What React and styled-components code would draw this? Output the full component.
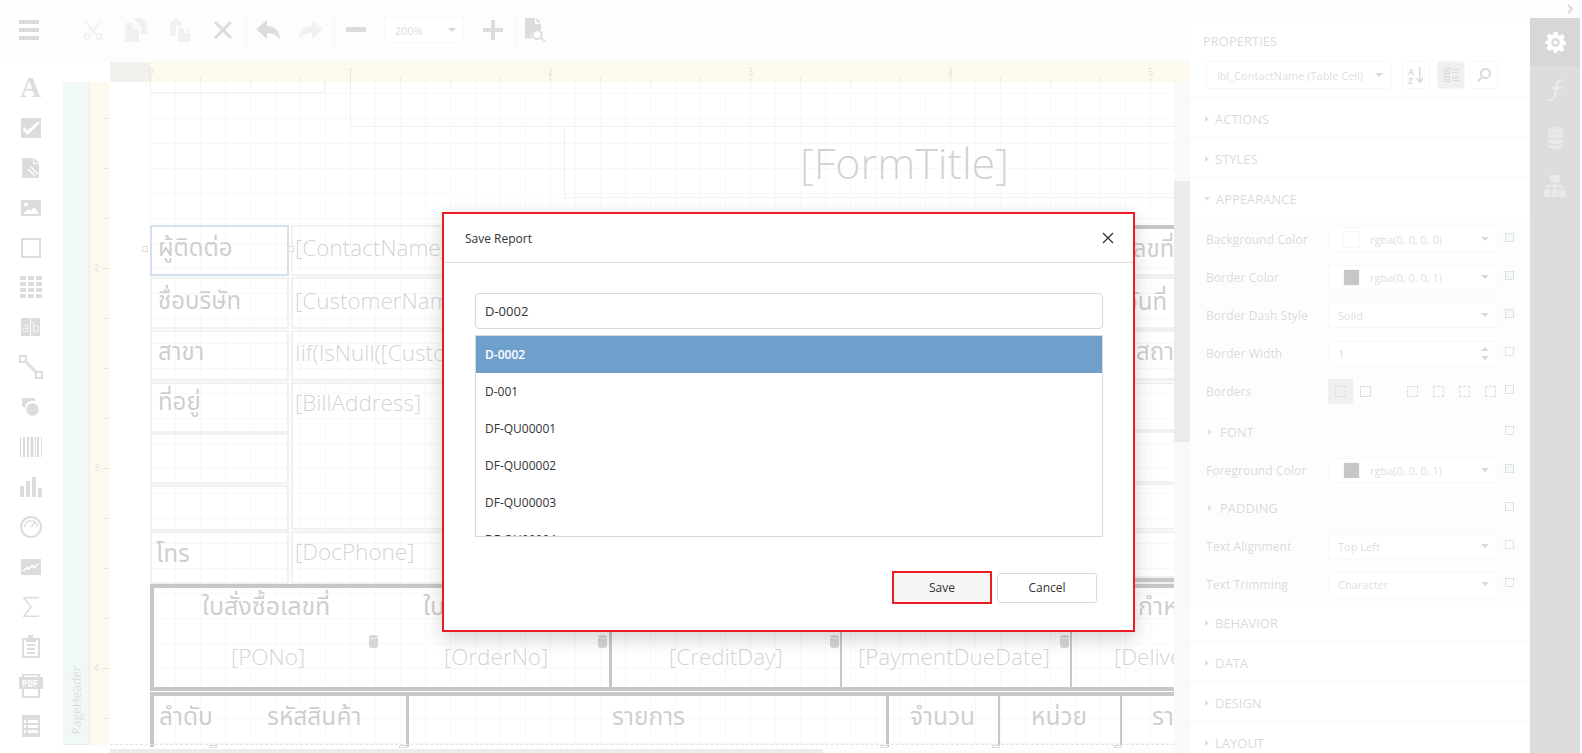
import React from "react";
import styled, { createGlobalStyle } from "styled-components";

const GlobalStyle = createGlobalStyle`
  html, body {
    margin: 0;
    padding: 0;
    overflow: hidden;
    background: #ffffff;
    font-family: "Open Sans", "Noto Sans", "Noto Sans Thai", "DejaVu Sans", sans-serif;
  }
  * { box-sizing: border-box; }
`;

/* icons */
const Svg = ({ w = 20, h = 20, vb = "0 0 20 20", children }) => (
  <svg width={w} height={h} viewBox={vb} fill="currentColor">
    {children}
  </svg>
);

const IconMenu = () => (
  <Svg h={20}><rect y="0" width="20" height="4" /><rect y="8" width="20" height="4" /><rect y="16" width="20" height="4" /></Svg>
);
const IconCut = () => (
  <Svg>
    <path d="M3 0l7 9 7-9h1.500l-7 11 2 3h-2.400L10 12l-1.100 2H6.500l2-3L1.500 0z" />
    <path fillRule="evenodd" d="M4 13a3.500 3.500 0 110 7 3.500 3.500 0 010-7zm0 1.800a1.700 1.700 0 100 3.400 1.700 1.700 0 000-3.400zM16 13a3.500 3.500 0 110 7 3.500 3.500 0 010-7zm0 1.800a1.700 1.700 0 100 3.400 1.700 1.700 0 000-3.400z" />
  </Svg>
);
const IconCopy = () => (
  <Svg w={22} h={24} vb="0 0 22 24">
    <path d="M10 0h7l5 5v11h-6V8l-6-5z" />
    <path d="M0 5h8v6h6v13H0z" />
    <path d="M10 5.500L13.500 9H10z" />
  </Svg>
);
const IconPaste = () => (
  <Svg w={22} h={24} vb="0 0 22 24">
    <path d="M2 3h4V0h4v3h4v5H8v10H2z" />
    <path d="M10 10h6v5h6v9H10z" />
    <path d="M18 10l4 4h-4z" />
  </Svg>
);
const IconClose = () => (
  <svg width="18" height="18" viewBox="0 0 18 18" fill="none" stroke="currentColor" strokeWidth="3">
    <path d="M1 1l16 16M17 1L1 17" />
  </svg>
);
const IconUndo = () => (
  <Svg w={24} h={20} vb="0 0 24 20">
    <path d="M11 0v6c8 0 13 5 13 14-3-5-7-7-13-7v6L0 9z" />
  </Svg>
);
const IconRedo = () => (
  <Svg w={24} h={20} vb="0 0 24 20">
    <path d="M13 0v6C5 6 0 11 0 20c3-5 7-7 13-7v6L24 9z" />
  </Svg>
);
const IconMinus = () => (
  <Svg h={6} vb="0 0 20 6"><rect width="20" height="5" /></Svg>
);
const IconPlus = () => (
  <Svg><path d="M8 0h4v8h8v4h-8v8H8v-8H0V8h8z" /></Svg>
);
const IconPreview = () => (
  <Svg w={22} h={24} vb="0 0 22 24">
    <path d="M0 0h10v6h6v6a7 7 0 00-9.500 8.500H0z" />
    <path d="M11.500 0L16 4.500h-4.500z" />
    <path fillRule="evenodd" d="M12 11a5.500 5.500 0 014.500 8.600l4.500 3.300-1.200 1.100-4.400-3.300A5.500 5.500 0 1112 11zm0 2a3.500 3.500 0 100 7 3.500 3.500 0 000-7z" />
  </Svg>
);
const IconCheck = () => (
  <Svg h={20}>
    <path fillRule="evenodd" d="M0 0h20v20H0zM1.500 11.500l5 5.500L18.500 5.500 17 3.500 6.500 12.500l-3-3z" />
  </Svg>
);
const IconSubreport = () => (
  <Svg w={17} h={20} vb="0 0 17 20">
    <path d="M0 0h11v6h6v14H0z" />
    <path d="M12 0l5 5h-5z" />
    <path d="M6 11l7 7M9 9l7 7" fill="none" stroke="#fcfcfc" strokeWidth="1.500" />
  </Svg>
);
const IconImage = () => (
  <Svg h={16} vb="0 0 20 16">
    <path fillRule="evenodd" d="M0 0h20v16H0zm5 2.500a2 2 0 100 4 2 2 0 000-4zM2 14l5-5 3 2 3-4 5 7z" />
  </Svg>
);
const IconRect = () => (
  <Svg><path fillRule="evenodd" d="M0 0h20v20H0zm2 2v16h16V2z" /></Svg>
);
const IconTable = () => (
  <Svg w={22} h={22} vb="0 0 22 22">
    {[0, 8, 16].map((x) => [0, 6, 12, 18].map((y) => <rect key={`${x}-${y}`} x={x} y={y} width="6" height="4" />))}
  </Svg>
);
const IconLabel = () => (
  <Svg w={19} h={18} vb="0 0 19 18">
    <rect width="9" height="18" />
    <rect x="10" width="9" height="18" />
    <text x="1.200" y="14" fontSize="12" fontWeight="300" fontFamily="Open Sans" fill="#fcfcfc">a</text>
    <text x="11" y="14" fontSize="12" fontWeight="300" fontFamily="Open Sans" fill="#fcfcfc">b</text>
  </Svg>
);
const IconLine = () => (
  <Svg w={24} h={24} vb="0 0 24 24">
    <path fillRule="evenodd" d="M0 0h8v8H0zm2 2v4h4V2zM16 16h8v8h-8zm2 2v4h4v-4z" />
    <path d="M7 5l12 12-2 2L5 7z" />
  </Svg>
);
const IconShape = () => (
  <Svg w={17} h={18} vb="0 0 17 18">
    <path d="M0 0h13v3A7.500 7.500 0 003 10.500L0 8z" />
    <circle cx="10.500" cy="11.500" r="6.200" />
  </Svg>
);
const IconBarcode = () => (
  <Svg w={22} h={20} vb="0 0 22 20">
    {[[0, 1], [3, 2], [7, 2], [10.500, 3], [15, 1], [17, 2], [21, 1]].map(([x, w]) => (
      <rect key={x} x={x} y="0" width={w} height="20" />
    ))}
  </Svg>
);
const IconChart = () => (
  <Svg w={22} h={20} vb="0 0 22 20">
    <rect y="9" width="4" height="11" /><rect x="6" y="4" width="4" height="16" />
    <rect x="12" y="0" width="4" height="20" /><rect x="18" y="11" width="4" height="9" />
  </Svg>
);
const IconGauge = () => (
  <Svg w={22} h={22} vb="0 0 22 22">
    <path fillRule="evenodd" d="M11 0a11 11 0 110 22 11 11 0 010-22zm0 2a9 9 0 100 18 9 9 0 000-18z" />
    <path d="M11 4a7 7 0 017 7h-1.500a5.500 5.500 0 00-1.600-3.900L12 11h-1.500l3.300-5A5.500 5.500 0 005.500 11H4a7 7 0 017-7z" />
  </Svg>
);
const IconSpark = () => (
  <Svg h={16} vb="0 0 20 16">
    <path fillRule="evenodd" d="M0 0h20v16H0zm2 13l4-3 2 1 3-3 2 2 5-5v-1l-5 3.500-2-2-3 3-2-1-4 3.500z" />
  </Svg>
);
const IconSigma = () => (
  <Svg w={16} h={20} vb="0 0 16 20">
    <path d="M0 0h16v1.500H2.500L9 10l-6.500 8.500H16V20H0v-1l7-9-7-9z" />
  </Svg>
);
const IconClipboard = () => (
  <Svg w={18} h={23} vb="0 0 18 23">
    <path fillRule="evenodd" d="M0 3h6V0h5v3h7v20H0zm2 2v16h14V5h-2v2H4V5z" />
    <rect x="5" y="9" width="8" height="2" /><rect x="5" y="13" width="8" height="2" /><rect x="5" y="17" width="8" height="2" />
  </Svg>
);
const IconPdf = () => (
  <Svg w={24} h={24} vb="0 0 24 24">
    <path fillRule="evenodd" d="M3 0h18v3h3v12h-3v9H3v-9H0V3h3zm2 1.500V3h14V1.500zM5 15v7h14v-7z" />
    <text x="3" y="12.500" fontSize="9" fontWeight="700" fontFamily="DejaVu Sans Mono" fill="#fcfcfc">PDF</text>
  </Svg>
);
const IconList = () => (
  <Svg w={18} h={22} vb="0 0 18 22">
    <path fillRule="evenodd" d="M0 0h18v22H0zm2 5v3h2V5zm4 0v3h10V5zM2 10v3h2v-3zm4 0v3h10v-3zM2 15v3h2v-3zm4 0v3h10v-3z" />
  </Svg>
);
const IconGear = () => (
  <Svg w={21} h={21} vb="0 0 20 20">
    <path fillRule="evenodd" d="M8 0h4l.500 2.800 1.600.700L16.500 2 19 4.700 17.300 7l.700 1.700L20 9v3l-2.300.500-.600 1.600 1.500 2.400-2.800 2.600-2.200-1.600-1.600.700L11.500 20h-3l-.500-2.800-1.600-.600L4 18 1.300 15.400l1.500-2.300-.600-1.600L0 11V8.500L2.300 8l.700-1.700L1.500 4 4 1.500l2.400 1.600L8 2.500zM10 6a4 4 0 100 8 4 4 0 000-8zm0 2a2 2 0 110 4 2 2 0 010-4z" />
  </Svg>
);
const IconFunc = () => (
  <Svg w={16} h={22} vb="0 0 16 22">
    <path d="M16 0v2c-3 0-4 .500-4.500 3L11 8h4v2h-4.300L9 18c-.600 3-2.500 4-5 4H1v-2h2.500c1.800 0 2.500-1 3-3l1.400-7H5V8h3.300L9 4.500C9.600 1.500 12 0 16 0z" />
  </Svg>
);
const IconDb = () => (
  <Svg w={15} h={22} vb="0 0 15 22">
    <ellipse cx="7.500" cy="3" rx="7.500" ry="3" />
    <path d="M0 5c1 2 14 2 15 0v4c-1 3-14 3-15 0zM0 11c1 2.500 14 2.500 15 0v4c-1 3-14 3-15 0zM0 17c1 2.500 14 2.500 15 0v2c-1 4-14 4-15 0z" />
  </Svg>
);
const IconTree = () => (
  <Svg w={22} h={22} vb="0 0 22 22">
    <rect x="6" y="0" width="10" height="7" />
    <path d="M10 7h2v3h7v5h-2v-3h-5v3h-2v-3H5v3H3v-5h7z" />
    <rect x="0" y="15" width="7" height="7" /><rect x="8" y="15" width="6" height="7" /><rect x="15" y="15" width="7" height="7" />
  </Svg>
);
const IconSort = () => (
  <Svg w={16} h={17} vb="0 0 16 17">
    <text x="0" y="7.500" fontSize="8.500" fontWeight="700" fontFamily="Open Sans">A</text>
    <text x="0" y="16.500" fontSize="8.500" fontWeight="700" fontFamily="Open Sans">Z</text>
    <path d="M11 0h1.500v13l2.500-3v2l-3.200 4.500L8.500 12v-2l2.500 3z" />
  </Svg>
);
const IconCategory = () => (
  <Svg w={15} h={15} vb="0 0 15 15">
    <path fillRule="evenodd" d="M0 0h6v6H0zm1 1v4h4V1zM0 8h6v6H0zm1 1v4h4V9z" />
    <rect x="2.500" y="2" width="1" height="2" /><rect x="2" y="2.500" width="2" height="1" />
    <rect x="2.500" y="10" width="1" height="2" /><rect x="2" y="10.500" width="2" height="1" />
    <rect x="8" y="1" width="7" height="1" /><rect x="8" y="4" width="7" height="1" />
    <rect x="8" y="9" width="7" height="1" /><rect x="8" y="12" width="7" height="1" />
  </Svg>
);
const IconSearch = () => (
  <Svg w={14} h={14} vb="0 0 14 14">
    <path fillRule="evenodd" d="M8.500 0a5.500 5.500 0 11-3.200 10L1.500 14 0 12.500 4 8.700A5.500 5.500 0 018.500 0zm0 2a3.500 3.500 0 100 7 3.500 3.500 0 000-7z" />
  </Svg>
);
const IconDbSmall = () => (
  <Svg w={9} h={13} vb="0 0 9 13">
    <ellipse cx="4.500" cy="1.500" rx="4.500" ry="1.500" />
    <path d="M0 3c1 1 8 1 9 0v8.500c-1 2-8 2-9 0z" />
  </Svg>
);

/* shell */
const Page = styled.div`
  position: relative;
  display: flex;
  width: 1582px;
  height: 753px;
  overflow: hidden;
  background: #ffffff;
`;

const LeftBar = styled.div`
  width: 61px;
  flex: none;
  display: flex;
  flex-direction: column;
  color: #626262;
`;

const MenuCell = styled.div`
  height: 62px;
  padding-top: 20px;
  padding-left: 19px;
  background: #f8f8f8;
  border-bottom: 1px solid #f0f0f0;
`;

const ToolList = styled.div`
  display: flex;
  flex-direction: column;
  background: #fcfcfc;
  flex: 1;
  padding-top: 6px;
`;

const ToolIcon = styled.div`
  height: 39.900px;
  flex: none;
  display: flex;
  justify-content: center;
  align-items: center;
  line-height: 0;
`;

const ToolA = styled.span`
  font-family: "Liberation Serif", serif;
  font-weight: 700;
  font-size: 29px;
  line-height: 1;
`;

const Main = styled.div`
  width: 1129px;
  flex: none;
  display: flex;
  flex-direction: column;
`;

const Toolbar = styled.div`
  height: 62px;
  flex: none;
  display: flex;
  align-items: center;
  background: #f6f6f6;
  color: #626262;
  padding: 0 0 2px 22px;
`;

const ToolBtn = styled.div`
  display: flex;
  align-items: center;
  line-height: 0;
  margin-right: ${(p) => p.$mr || 0}px;
  opacity: ${(p) => (p.$faded ? 0.35 : 1)};
`;

const ToolSep = styled.div`
  width: 1px;
  height: 34px;
  background: #d5d5d5;
  margin-right: ${(p) => p.$mr}px;
`;

const ZoomCombo = styled.div`
  width: 80px;
  height: 26px;
  margin-right: 19px;
  display: flex;
  align-items: center;
  justify-content: space-between;
  padding: 0 7px 0 10px;
  background: #ffffff;
  border: 1px solid #dddddd;
  border-radius: 3px;
  font-size: 11px;
  color: #555555;
`;

const Caret = styled.i`
  width: 0;
  height: 0;
  display: block;
  border-left: 4px solid transparent;
  border-right: 4px solid transparent;
  border-top: 4px solid #555555;
`;

const RulerRow = styled.div`
  height: 20px;
  flex: none;
  display: flex;
  padding-left: 49px;
`;

const RulerCorner = styled.div`
  width: 40px;
  flex: none;
  background: #bdbdb0;
`;

const Ruler = styled.div`
  position: relative;
  flex: 1;
  background: #fae4ad;
`;

const RulerTick = styled.i`
  position: absolute;
  left: ${(p) => p.$x}px;
  bottom: 0;
  width: 1px;
  height: ${(p) => (p.$major ? 8 : 4)}px;
  background: #8a8a80;
`;

const RulerNum = styled.span`
  position: absolute;
  left: ${(p) => p.$x - 2}px;
  top: 3px;
  font-size: 9px;
  color: #666666;
`;

const Work = styled.div`
  flex: 1;
  display: flex;
  min-height: 0;
`;

const BandStrip = styled.div`
  width: 46px;
  margin-left: 2px;
  margin-bottom: 8px;
  flex: none;
  display: flex;
  margin-right: 1px;
`;

const BandName = styled.div`
  width: 27px;
  flex: none;
  background: #bfe2df;
  border-right: 1px solid #aaaaaa;
  border-bottom: 1px solid #aaaaaa;
  display: flex;
  align-items: flex-end;
  justify-content: center;
  padding-bottom: 10px;
`;

const BandText = styled.span`
  writing-mode: vertical-rl;
  transform: rotate(180deg);
  font-size: 12px;
  color: #666666;
`;

const SideRuler = styled.div`
  position: relative;
  flex: 1;
  background: #fae4ad;
`;

const SideTick = styled.i`
  position: absolute;
  right: 0;
  top: ${(p) => p.$y}px;
  width: 6px;
  height: 1px;
  background: #8a8a80;
`;

const SideNum = styled.span`
  position: absolute;
  left: 4px;
  top: ${(p) => p.$y - 7}px;
  font-size: 9px;
  color: #666666;
`;

const Canvas = styled.div`
  position: relative;
  flex: 1;
  overflow: hidden;
  background: #ffffff;
`;

const GridLayer = styled.div`
  position: absolute;
  left: 40px;
  top: 0;
  bottom: 9px;
  right: 0;
  background-image:
    linear-gradient(to right, #dedede 1px, transparent 1px),
    linear-gradient(to bottom, #dedede 1px, transparent 1px);
  background-size: 25px 25px, 25px 25px;
  background-position: 0 0, 0 11px;
`;

const Frame = styled.div`
  position: absolute;
  left: ${(p) => p.$x}px;
  top: ${(p) => p.$y}px;
  width: ${(p) => p.$w}px;
  height: ${(p) => p.$h}px;
  border: ${(p) => p.$line || "2px solid #bdbdbd"};
  ${(p) => p.$noTop && "border-top: none;"}
  ${(p) => p.$noBottom && "border-bottom: none;"}
  display: flex;
  align-items: ${(p) => p.$valign || "center"};
  white-space: nowrap;
  overflow: hidden;
`;

const CellText = styled.span`
  font-size: ${(p) => p.$size || 24}px;
  font-weight: 400;
  color: #222222;
  padding-left: ${(p) => p.$pad || 0}px;
  padding-bottom: ${(p) => p.$pb || 0}px;
  font-family: "Noto Sans Thai", "Open Sans", "Noto Sans", sans-serif;
  line-height: 1;
`;

const FieldText = styled.span`
  font-size: ${(p) => p.$size || 22.500}px;
  font-weight: 300;
  color: #333333;
  padding-left: ${(p) => p.$pad || 0}px;
  padding-bottom: ${(p) => p.$pb || 0}px;
  padding-top: ${(p) => p.$pt || 0}px;
  font-family: "Open Sans", sans-serif;
  line-height: 1;
`;

const Bar = styled.div`
  position: absolute;
  left: ${(p) => p.$x}px;
  top: ${(p) => p.$y}px;
  width: ${(p) => p.$w}px;
  height: ${(p) => p.$h}px;
  background: #000000;
`;

const Marker = styled.div`
  position: absolute;
  left: ${(p) => p.$x}px;
  top: ${(p) => p.$y}px;
  color: #444444;
  line-height: 0;
  white-space: nowrap;
`;

const Handle = styled.i`
  position: absolute;
  left: ${(p) => p.$x}px;
  top: ${(p) => p.$y}px;
  width: 6px;
  height: 6px;
  background: #ffffff;
  border: 1px solid #666666;
`;

const BottomHandle = styled.i`
  position: absolute;
  left: ${(p) => p.$x}px;
  top: 663px;
  width: 8px;
  height: 3px;
  border: 1px solid #666666;
  background: #ffffff;
`;

const BandEdge = styled.div`
  position: absolute;
  left: 0;
  right: 0;
  top: 662px;
  border-top: 1px dashed #888888;
`;

const VScroll = styled.div`
  width: 16px;
  flex: none;
  background: #e2e2e2;
  display: flex;
  flex-direction: column;
`;

const VTrack = styled.div`
  height: 99px;
  flex: none;
  background: #e2e2e2;
`;

const VThumb = styled.div`
  height: 261px;
  flex: none;
  background: #a4a4a4;
`;

const HScroll = styled.div`
  position: absolute;
  left: 0;
  right: 0;
  bottom: 0;
  height: 4px;
  background: #f2f2f2;
`;

const HThumb = styled.div`
  width: 713px;
  height: 100%;
  background: #aaaaaa;
`;

/* right panel */
const Panel = styled.div`
  width: 340px;
  flex: none;
  display: flex;
  flex-direction: column;
  margin-top: 18px;
  background: #ffffff;
`;

const RightWrap = styled.div`
  position: relative;
  width: 392px;
  flex: none;
  display: flex;
`;

const TopStrip = styled.div`
  position: absolute;
  left: 0;
  top: 0;
  right: 0;
  height: 18px;
  background: #f6f6f6;
  color: #555555;
  display: flex;
  align-items: center;
  justify-content: flex-end;
  padding-right: 8px;
`;

const TabBar = styled.div`
  width: 50px;
  flex: none;
  margin-top: 18px;
  background: #646464;
  display: flex;
  flex-direction: column;
  color: #999999;
`;

const Tab = styled.div`
  height: 48px;
  display: flex;
  align-items: center;
  justify-content: center;
  line-height: 0;
  background: ${(p) => (p.$active ? "#4a4a4a" : "transparent")};
  color: ${(p) => (p.$active ? "#ffffff" : "#999999")};
`;

const PanelHead = styled.div`
  height: 80px;
  padding: 14px 0 0 13px;
  flex: none;
  border-bottom: 1px solid #dddddd;
`;

const PanelTitle = styled.div`
  font-size: 13px;
  line-height: 18px;
  color: #555555;
`;

const HeadRow = styled.div`
  display: flex;
  margin: 11px 0 0 3px;
`;

const SelectBox = styled.div`
  display: flex;
  align-items: center;
  justify-content: space-between;
  width: ${(p) => p.$w}px;
  height: ${(p) => p.$h}px;
  flex: none;
  background: #ffffff;
  border: 1px solid #dddddd;
  border-radius: 3px;
  padding: 0 8px 0 ${(p) => p.$pl}px;
  font-size: 11px;
  color: #666666;
`;

const SquareBtn = styled.div`
  width: 28px;
  height: 28px;
  flex: none;
  margin-left: ${(p) => p.$ml}px;
  display: flex;
  align-items: center;
  justify-content: center;
  line-height: 0;
  color: #555555;
  border: 1px solid #dddddd;
  border-radius: 3px;
  background: ${(p) => (p.$active ? "#b9b9b9" : "#ffffff")};
`;

const Section = styled.div`
  height: 40px;
  flex: none;
  display: flex;
  align-items: center;
  padding: 2px 0 0 15px;
  gap: 6px;
  font-size: 13px;
  color: #555555;
  border-bottom: ${(p) => (p.$flat ? "none" : "1px solid #e4e4e4")};
`;

const Tri = styled.i`
  width: 0;
  height: 0;
  display: block;
  flex: none;
  border-top: 3px solid transparent;
  border-bottom: 3px solid transparent;
  border-left: 4px solid #777777;
`;

const TriDown = styled.i`
  width: 0;
  height: 0;
  display: block;
  flex: none;
  margin-left: -1px;
  border-left: 3px solid transparent;
  border-right: 3px solid transparent;
  border-top: 4px solid #777777;
`;

const Group = styled.div`
  flex: none;
  height: 384px;
  padding-top: 2px;
  background: #f7f7f7;
`;

const PropRow = styled.div`
  height: 38px;
  display: flex;
  align-items: center;
  padding-left: 16px;
  margin-top: ${(p) => p.$mt || 0}px;
  position: relative;
`;

const PropLabel = styled.div`
  width: 122px;
  flex: none;
  font-size: 12px;
  color: #555555;
  letter-spacing: 0.1px;
`;

const Swatch = styled.i`
  width: 17px;
  height: 17px;
  flex: none;
  display: block;
  margin-right: 10px;
  background: ${(p) => p.$c};
  border: 1px solid #dddddd;
`;

const ValueWrap = styled.div`
  display: flex;
  align-items: center;
`;

const Spin = styled.div`
  display: flex;
  flex-direction: column;
  gap: 5px;
`;

const CaretUp = styled.i`
  width: 0;
  height: 0;
  display: block;
  border-left: 4px solid transparent;
  border-right: 4px solid transparent;
  border-bottom: 4px solid #555555;
`;

const Check = styled.i`
  position: absolute;
  left: 315px;
  top: 13px;
  width: 9px;
  height: 9px;
  display: block;
  border: 1px solid #777777;
  background: ${(p) => (p.$tint ? "#c8e6f2" : "transparent")};
`;

const SubHead = styled.div`
  height: 100%;
  display: flex;
  align-items: center;
  gap: 8px;
  font-size: 13px;
  color: #555555;
  padding-left: 2px;
`;

const BorderTools = styled.div`
  display: flex;
  align-items: center;
`;

const BorderCell = styled.div`
  width: 25px;
  height: 25px;
  display: flex;
  align-items: center;
  justify-content: center;
  margin-right: ${(p) => p.$mr || 0}px;
  background: ${(p) => (p.$active ? "#b9b9b9" : "transparent")};
`;

const BorderBox = styled.i`
  width: 11px;
  height: 11px;
  display: block;
  border: 1px ${(p) => (p.$solid ? "solid #666666" : "dashed #666666")};
`;

/* dialog */
const Overlay = styled.div`
  position: absolute;
  inset: 0;
  background: rgba(255, 255, 255, 0.78);
`;

const Dialog = styled.div`
  position: absolute;
  left: 442px;
  top: 212px;
  width: 693px;
  height: 420px;
  display: flex;
  flex-direction: column;
  background: #ffffff;
  border: 2px solid #ed1c24;
  box-shadow: 0 6px 18px rgba(0, 0, 0, 0.18);
  color: #333333;
`;

const DialogHead = styled.div`
  height: 49px;
  flex: none;
  display: flex;
  align-items: center;
  justify-content: space-between;
  padding: 0 19px 0 21px;
  border-bottom: 1px solid #dddddd;
  font-size: 12px;
`;

const CloseBtn = styled.div`
  color: #333333;
  line-height: 0;
`;

const DialogBody = styled.div`
  flex: 1;
  padding: 30px 30px 0 31px;
`;

const NameInput = styled.div`
  height: 36px;
  display: flex;
  align-items: center;
  padding-left: 9px;
  border: 1px solid #d9d9d9;
  border-radius: 4px;
  font-size: 13px;
`;

const FileList = styled.div`
  height: 202px;
  margin-top: 6px;
  border: 1px solid #d9d9d9;
  overflow: hidden;
`;

const FileRow = styled.div`
  height: 37px;
  display: flex;
  align-items: center;
  padding-left: 9px;
  font-size: 12px;
  background: ${(p) => (p.$selected ? "#6fa0cc" : "#ffffff")};
  color: ${(p) => (p.$selected ? "#ffffff" : "#333333")};
  font-weight: ${(p) => (p.$selected ? 600 : 400)};
`;

const DialogFoot = styled.div`
  display: flex;
  justify-content: flex-end;
  align-items: center;
  gap: 5px;
  margin-top: 34px;
  padding-right: 6px;
`;

const Button = styled.div`
  width: 100px;
  height: ${(p) => (p.$primary ? 33 : 30)}px;
  display: flex;
  align-items: center;
  justify-content: center;
  font-size: 12px;
  color: #333333;
  background: ${(p) => (p.$primary ? "#f5f5f5" : "#ffffff")};
  border: ${(p) => (p.$primary ? "2px solid #ed1c24" : "1px solid #d9d9d9")};
  border-radius: ${(p) => (p.$primary ? 0 : 3)}px;
`;

const leftTools = [
  <ToolA key="a">A</ToolA>,
  <IconCheck key="c" />,
  <IconSubreport key="s" />,
  <IconImage key="i" />,
  <IconRect key="r" />,
  <IconTable key="t" />,
  <IconLabel key="l" />,
  <IconLine key="ln" />,
  <IconShape key="sh" />,
  <IconBarcode key="b" />,
  <IconChart key="ch" />,
  <IconGauge key="g" />,
  <IconSpark key="sp" />,
  <IconSigma key="sg" />,
  <IconClipboard key="cl" />,
  <IconPdf key="p" />,
  <IconList key="li" />,
];

const files = ["D-0002", "D-001", "DF-QU00001", "DF-QU00002", "DF-QU00003", "DF-QU00004"];

const rulerTicks = Array.from({ length: 21 }, (_, i) => i);

const ColorSelect = ({ color, value }) => (
  <SelectBox $w={170} $h={25} $pl={14}>
    <ValueWrap>
      <Swatch $c={color} />
      {value}
    </ValueWrap>
    <Caret />
  </SelectBox>
);

const TextSelect = ({ value }) => (
  <SelectBox $w={170} $h={25} $pl={9}>
    {value}
    <Caret />
  </SelectBox>
);

const App = () => {
  return (
    <Page>
      <GlobalStyle />
      <LeftBar>
        <MenuCell>
          <IconMenu />
        </MenuCell>
        <ToolList>
          {leftTools.map((icon, i) => (
            <ToolIcon key={i}>{icon}</ToolIcon>
          ))}
        </ToolList>
      </LeftBar>

      <Main>
        <Toolbar>
          <ToolBtn $mr={22} $faded><IconCut /></ToolBtn>
          <ToolBtn $mr={21} $faded><IconCopy /></ToolBtn>
          <ToolBtn $mr={24} $faded><IconPaste /></ToolBtn>
          <ToolBtn $mr={14}><IconClose /></ToolBtn>
          <ToolSep $mr={9} />
          <ToolBtn $mr={19}><IconUndo /></ToolBtn>
          <ToolBtn $mr={11} $faded><IconRedo /></ToolBtn>
          <ToolSep $mr={11} />
          <ToolBtn $mr={18}><IconMinus /></ToolBtn>
          <ZoomCombo>
            200%
            <Caret />
          </ZoomCombo>
          <ToolBtn $mr={13}><IconPlus /></ToolBtn>
          <ToolSep $mr={8} />
          <ToolBtn><IconPreview /></ToolBtn>
        </Toolbar>

        <RulerRow>
          <RulerCorner />
          <Ruler>
            {rulerTicks.map((i) => (
              <RulerTick key={i} $x={i * 50} $major={i % 4 === 0} />
            ))}
            {[0, 1, 2, 3, 4, 5].map((n) => (
              <RulerNum key={n} $x={n * 200}>{n}</RulerNum>
            ))}
          </Ruler>
        </RulerRow>

        <Work>
          <BandStrip>
            <BandName>
              <BandText>PageHeader</BandText>
            </BandName>
            <SideRuler>
              {Array.from({ length: 13 }, (_, i) => (
                <SideTick key={i} $y={36 + i * 50} />
              ))}
              <SideNum $y={186}>2</SideNum>
              <SideNum $y={386}>3</SideNum>
              <SideNum $y={586}>4</SideNum>
            </SideRuler>
          </BandStrip>

          <Canvas>
            <GridLayer />

            <Frame $x={40} $y={-10} $w={175} $h={21} $line="1px solid #bbbbbb" />
            <Frame $x={240} $y={-10} $w={900} $h={55} $line="1px solid #bbbbbb" />
            <Frame $x={454} $y={45} $w={700} $h={71} $line="1px solid #bbbbbb" $noTop>
              <FieldText $size={43} $pad={235}>[FormTitle]</FieldText>
            </Frame>

            <Frame $x={40} $y={143} $w={139} $h={51} $line="2px solid #2f78c0">
              <CellText $pad={6} $pb={4}>ผู้ติดต่อ</CellText>
            </Frame>
            <Frame $x={181} $y={143} $w={1100} $h={51}>
              <FieldText $pad={2} $pb={4}>[ContactName]</FieldText>
            </Frame>
            <Frame $x={40} $y={195} $w={139} $h={52}>
              <CellText $pad={6} $pb={2}>ชื่อบริษัท</CellText>
            </Frame>
            <Frame $x={181} $y={195} $w={1100} $h={52}>
              <FieldText $pad={2} $pb={4}>[CustomerName]</FieldText>
            </Frame>
            <Frame $x={40} $y={248} $w={139} $h={51}>
              <CellText $pad={6} $pb={6}>สาขา</CellText>
            </Frame>
            <Frame $x={181} $y={248} $w={1100} $h={51}>
              <FieldText $pad={2} $pb={4}>Iif(IsNull([CustomerBranch</FieldText>
            </Frame>
            <Frame $x={40} $y={300} $w={139} $h={51}>
              <CellText $pad={6} $pb={10}>ที่อยู่</CellText>
            </Frame>
            <Frame $x={181} $y={300} $w={1100} $h={148} $valign="flex-start">
              <FieldText $pad={2} $pt={8}>[BillAddress]</FieldText>
            </Frame>
            <Frame $x={40} $y={351} $w={139} $h={51} />
            <Frame $x={40} $y={403} $w={139} $h={46} />
            <Frame $x={40} $y={449} $w={139} $h={53}>
              <CellText $pad={4} $pb={6}>โทร</CellText>
            </Frame>
            <Frame $x={181} $y={449} $w={1100} $h={53}>
              <FieldText $pad={2} $pb={10}>[DocPhone]</FieldText>
            </Frame>

            <Frame $x={1000} $y={143} $w={200} $h={52}>
              <CellText $pad={14} $pb={2}>เลขที่</CellText>
            </Frame>
            <Frame $x={1000} $y={195} $w={200} $h={53}>
              <CellText $pad={14} $pb={2}>วันที่</CellText>
            </Frame>
            <Frame $x={1000} $y={248} $w={200} $h={50}>
              <CellText $pad={24} $pb={4}>สถานะ</CellText>
            </Frame>
            <Frame $x={1000} $y={297} $w={200} $h={52} />
            <Frame $x={1000} $y={349} $w={200} $h={52} />
            <Frame $x={1000} $y={401} $w={200} $h={95} />

            <Bar $x={1000} $y={143} $w={100} $h={4} />
            <Bar $x={1000} $y={496} $w={100} $h={4} />

            {/* order header table */}
            <Frame $x={40} $y={502} $w={1200} $h={107} $line="4px solid #000000" />
            <Bar $x={499} $y={505} $w={3} $h={100} />
            <Bar $x={730} $y={505} $w={2} $h={100} />
            <Bar $x={960} $y={505} $w={2} $h={100} />
            <Marker $x={92} $y={513}><CellText $size={25}>ใบสั่งซื้อเลขที่</CellText></Marker>
            <Marker $x={313} $y={513}><CellText $size={25}>ใบสั่งขาย</CellText></Marker>
            <Marker $x={1028} $y={513}><CellText $size={25}>กำหนดส่ง</CellText></Marker>
            <Marker $x={121} $y={564}><FieldText>[PONo]</FieldText></Marker>
            <Marker $x={334} $y={564}><FieldText>[OrderNo]</FieldText></Marker>
            <Marker $x={559} $y={564}><FieldText>[CreditDay]</FieldText></Marker>
            <Marker $x={748} $y={564}><FieldText>[PaymentDueDate]</FieldText></Marker>
            <Marker $x={1004} $y={564}><FieldText>[DeliveryDate]</FieldText></Marker>
            <Marker $x={259} $y={553}><IconDbSmall /></Marker>
            <Marker $x={488} $y={553}><IconDbSmall /></Marker>
            <Marker $x={720} $y={553}><IconDbSmall /></Marker>
            <Marker $x={950} $y={553}><IconDbSmall /></Marker>

            {/* lines header table */}
            <Frame $x={40} $y={610} $w={1200} $h={55} $line="4px solid #000000" $noBottom />
            <Bar $x={296} $y={612} $w={3} $h={53} />
            <Bar $x={776} $y={612} $w={3} $h={53} />
            <Bar $x={888} $y={612} $w={2} $h={53} />
            <Bar $x={1010} $y={612} $w={2} $h={53} />
            <Marker $x={49} $y={624}><CellText $size={24.500}>ลำดับ</CellText></Marker>
            <Marker $x={157} $y={624}><CellText $size={24.500}>รหัสสินค้า</CellText></Marker>
            <Marker $x={502} $y={624}><CellText $size={24.500}>รายการ</CellText></Marker>
            <Marker $x={800} $y={624}><CellText $size={24.500}>จำนวน</CellText></Marker>
            <Marker $x={921} $y={624}><CellText $size={24.500}>หน่วย</CellText></Marker>
            <Marker $x={1042} $y={624}><CellText $size={24.500}>ราคา</CellText></Marker>

            <Handle $x={32} $y={164} />
            <Handle $x={178} $y={164} />

            <BandEdge />
            <BottomHandle $x={99} />
            <BottomHandle $x={289} />
            <BottomHandle $x={770} />
            <BottomHandle $x={882} />
            <BottomHandle $x={1004} />

            <HScroll>
              <HThumb />
            </HScroll>
          </Canvas>

          <VScroll>
            <VTrack />
            <VThumb />
          </VScroll>
        </Work>
      </Main>

      <RightWrap>
        <TopStrip>
          <svg width="7" height="10" viewBox="0 0 7 10" fill="none" stroke="currentColor" strokeWidth="2">
            <path d="M1 1l4 4-4 4" />
          </svg>
        </TopStrip>
        <Panel>
          <PanelHead>
            <PanelTitle>PROPERTIES</PanelTitle>
            <HeadRow>
              <SelectBox $w={186} $h={28} $pl={10}>
                lbl_ContactName (Table Cell)
                <Caret />
              </SelectBox>
              <SquareBtn $ml={10}><IconSort /></SquareBtn>
              <SquareBtn $ml={7} $active><IconCategory /></SquareBtn>
              <SquareBtn $ml={5}><IconSearch /></SquareBtn>
            </HeadRow>
          </PanelHead>
          <Section><Tri />ACTIONS</Section>
          <Section><Tri />STYLES</Section>
          <Section $flat><TriDown />APPEARANCE</Section>
          <Group>
            <PropRow>
              <PropLabel>Background Color</PropLabel>
              <ColorSelect color="#ffffff" value="rgba(0, 0, 0, 0)" />
              <Check $tint />
            </PropRow>
            <PropRow>
              <PropLabel>Border Color</PropLabel>
              <ColorSelect color="#000000" value="rgba(0, 0, 0, 1)" />
              <Check $tint />
            </PropRow>
            <PropRow>
              <PropLabel>Border Dash Style</PropLabel>
              <TextSelect value="Solid" />
              <Check $tint />
            </PropRow>
            <PropRow>
              <PropLabel>Border Width</PropLabel>
              <SelectBox $w={170} $h={25} $pl={9}>
                1
                <Spin><CaretUp /><Caret /></Spin>
              </SelectBox>
              <Check />
            </PropRow>
            <PropRow>
              <PropLabel>Borders</PropLabel>
              <BorderTools>
                <BorderCell $active><BorderBox /></BorderCell>
                <BorderCell $mr={22}><BorderBox $solid /></BorderCell>
                <BorderCell $mr={1}><BorderBox /></BorderCell>
                <BorderCell $mr={1}><BorderBox /></BorderCell>
                <BorderCell $mr={1}><BorderBox /></BorderCell>
                <BorderCell><BorderBox /></BorderCell>
              </BorderTools>
              <Check />
            </PropRow>
            <PropRow $mt={3}>
              <SubHead><Tri />FONT</SubHead>
              <Check />
            </PropRow>
            <PropRow>
              <PropLabel>Foreground Color</PropLabel>
              <ColorSelect color="#000000" value="rgba(0, 0, 0, 1)" />
              <Check $tint />
            </PropRow>
            <PropRow>
              <SubHead><Tri />PADDING</SubHead>
              <Check />
            </PropRow>
            <PropRow>
              <PropLabel>Text Alignment</PropLabel>
              <TextSelect value="Top Left" />
              <Check />
            </PropRow>
            <PropRow>
              <PropLabel>Text Trimming</PropLabel>
              <TextSelect value="Character" />
              <Check />
            </PropRow>
          </Group>
          <Section><Tri />BEHAVIOR</Section>
          <Section><Tri />DATA</Section>
          <Section><Tri />DESIGN</Section>
          <Section $flat><Tri />LAYOUT</Section>
        </Panel>
        <TabBar>
          <Tab $active><IconGear /></Tab>
          <Tab><IconFunc /></Tab>
          <Tab><IconDb /></Tab>
          <Tab><IconTree /></Tab>
        </TabBar>
      </RightWrap>

      <Overlay />

      <Dialog>
        <DialogHead>
          Save Report
          <CloseBtn>
            <svg width="12" height="12" viewBox="0 0 12 12" fill="none" stroke="currentColor" strokeWidth="1.300">
              <path d="M1 1l10 10M11 1L1 11" />
            </svg>
          </CloseBtn>
        </DialogHead>
        <DialogBody>
          <NameInput>D-0002</NameInput>
          <FileList>
            {files.map((f, i) => (
              <FileRow key={f} $selected={i === 0}>{f}</FileRow>
            ))}
          </FileList>
          <DialogFoot>
            <Button $primary>Save</Button>
            <Button>Cancel</Button>
          </DialogFoot>
        </DialogBody>
      </Dialog>
    </Page>
  );
};

export default App;
